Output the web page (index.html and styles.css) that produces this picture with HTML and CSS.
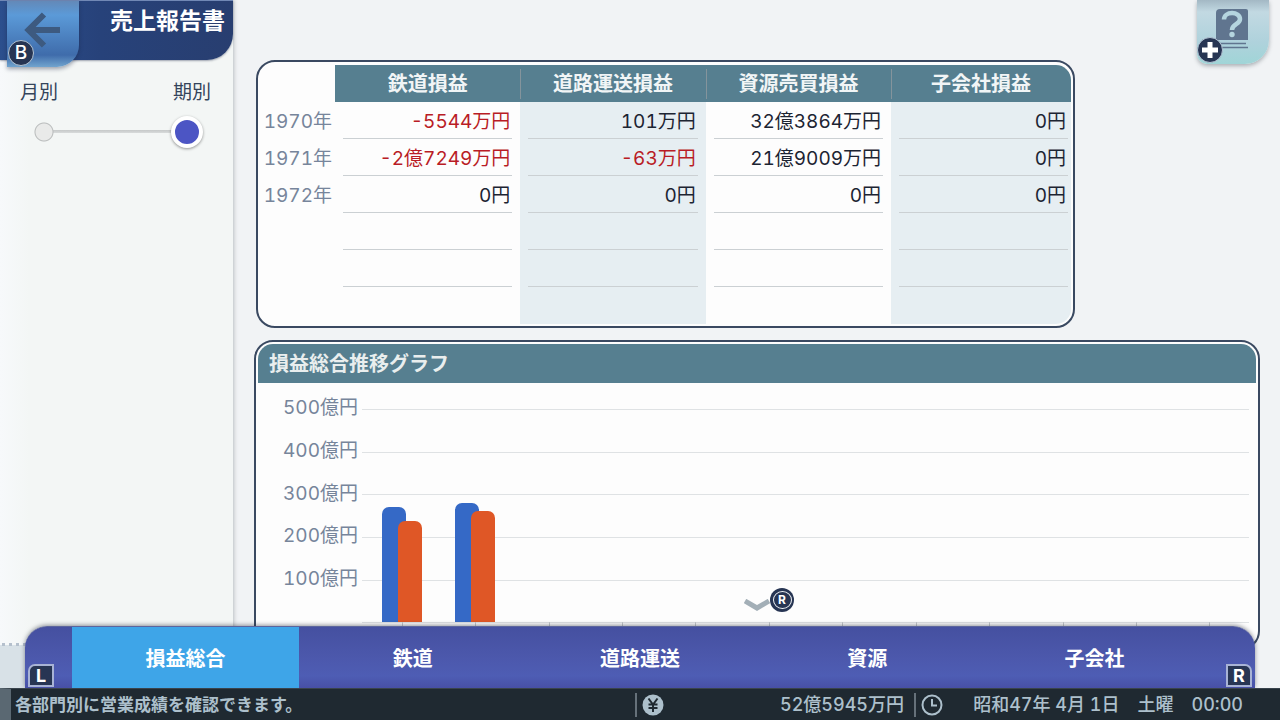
FILE: index.html
```html
<!DOCTYPE html>
<html lang="ja">
<head>
<meta charset="utf-8">
<meta name="viewport" content="width=device-width, initial-scale=1">
<title>売上報告書</title>
<link rel="stylesheet" href="styles.css">
</head>
<body>
<div class="screen">
  <aside class="sidebar">
    <header class="title-bar">
      <button class="back" type="button" aria-label="戻る">
        <svg class="back-arrow" viewBox="0 0 38 38" width="38" height="38" aria-hidden="true"><path d="M36 19H5M20 3.500L4.500 19 20 34.500" fill="none" stroke="#3d5a80" stroke-width="6"/></svg>
        <span class="pad-key key-b">B</span>
      </button>
      <h1 class="title">売上報告書</h1>
    </header>
    <div class="period">
      <div class="period-labels">
        <label for="period">月別</label>
        <label for="period">期別</label>
      </div>
      <input class="period-slider" id="period" type="range" min="0" max="1" step="1" value="1">
    </div>
    <div class="dotted-strip"></div>
  </aside>

  <main class="content">
    <section class="card table-card">
      <table class="ledger">
        <colgroup><col class="col-year"><col class="col-value"><col class="col-value"><col class="col-value"><col></colgroup>
        <thead>
          <tr><td class="corner"></td><th scope="col">鉄道損益</th><th scope="col">道路運送損益</th><th scope="col">資源売買損益</th><th scope="col">子会社損益</th></tr>
        </thead>
        <tbody>
          <tr><th scope="row">1970年</th><td class="loss">-5544万円</td><td>101万円</td><td>32億3864万円</td><td>0円</td></tr>
          <tr><th scope="row">1971年</th><td class="loss">-2億7249万円</td><td class="loss">-63万円</td><td>21億9009万円</td><td>0円</td></tr>
          <tr><th scope="row">1972年</th><td>0円</td><td>0円</td><td>0円</td><td>0円</td></tr>
          <tr><th></th><td></td><td></td><td></td><td></td></tr>
          <tr><th></th><td></td><td></td><td></td><td></td></tr>
          <tr><th></th><td></td><td></td><td></td><td></td></tr>
        </tbody>
      </table>
    </section>

    <section class="card chart-card">
      <h2 class="chart-title">損益総合推移グラフ</h2>
      <div class="chart">
        <div class="scale">
          <div class="step"><span>500億円</span><i></i></div>
          <div class="step"><span>400億円</span><i></i></div>
          <div class="step"><span>300億円</span><i></i></div>
          <div class="step"><span>200億円</span><i></i></div>
          <div class="step"><span>100億円</span><i></i></div>
          <div class="step"><span></span><i></i></div>
        </div>
        <div class="bars">
          <div class="group"><b class="bar blue" style="height:54%"></b><b class="bar orange" style="height:47.500%"></b></div>
          <div class="group"><b class="bar blue" style="height:56%"></b><b class="bar orange" style="height:52%"></b></div>
          <div class="group"></div><div class="group"></div><div class="group"></div><div class="group"></div>
          <div class="group"></div><div class="group"></div><div class="group"></div><div class="group"></div>
          <div class="group"></div><div class="group"></div>
        </div>
      </div>
    </section>
  </main>

  <button class="help" type="button" aria-label="ヘルプ">
    <svg viewBox="0 0 34 42" width="34" height="42" aria-hidden="true">
      <path d="M5 0h26q2 0 2 2v29H1V4q0-4 4-4z" fill="#60758f"/>
      <path d="M2 34.500h29M5 38.500h28" stroke="#60758f" stroke-width="1.500"/>
      <path d="M9 10.500C9 2 25 2 25 10c0 5.500-8 5-8 11" fill="none" stroke="#b5d5df" stroke-width="4.500"/>
      <circle cx="17" cy="25.500" r="2.700" fill="#b5d5df"/>
    </svg>
    <span class="pad-key key-plus"><svg viewBox="0 0 18 18" width="18" height="18" aria-hidden="true"><path d="M9 1v16M1 9h16" stroke="#fff" stroke-width="5" stroke-linejoin="round"/></svg></span>
  </button>

  <div class="scroll-hint" aria-hidden="true">
    <svg viewBox="0 0 26 12" width="26" height="12"><path d="M1 2l12 7 12-7" fill="none" stroke="#a3afb7" stroke-width="5"/></svg>
    <span class="stick"><span>R</span></span>
  </div>

  <nav class="tabs">
    <span class="shoulder left">L</span>
    <button class="tab active" type="button">損益総合</button>
    <button class="tab" type="button">鉄道</button>
    <button class="tab" type="button">道路運送</button>
    <button class="tab" type="button">資源</button>
    <button class="tab" type="button">子会社</button>
    <span class="shoulder right">R</span>
  </nav>
</div>

<footer class="status">
  <p class="message">各部門別に営業成績を確認できます。</p>
  <div class="money">
    <svg viewBox="0 0 22 22" width="22" height="22" aria-hidden="true"><circle cx="11" cy="11" r="10.500" fill="#adc0cc"/><path d="M6.500 4.500L11 10.500l4.500-6M11 10v8M6.500 10.500h9M6.500 14h9" fill="none" stroke="#1f2931" stroke-width="2"/></svg>
    <span>52億5945万円</span>
  </div>
  <div class="clock">
    <svg viewBox="0 0 22 22" width="22" height="22" aria-hidden="true"><circle cx="11" cy="11" r="9.500" fill="none" stroke="#adc0cc" stroke-width="2"/><path d="M11 5v6.500h5" fill="none" stroke="#adc0cc" stroke-width="2"/></svg>
    <span class="date">昭和47年 4月 1日</span>
    <span>土曜</span>
    <time>00:00</time>
  </div>
</footer>
</body>
</html>
```

FILE: styles.css
```css
* { box-sizing: border-box; }

body {
  margin: 0;
  height: 100vh;
  display: flex;
  flex-direction: column;
  overflow: hidden;
  background: #f1f3f5;
  color: #1c2432;
  font-family: Inter, "Noto Sans CJK JP", sans-serif;
  font-size: 20px;
  font-variant-numeric: tabular-nums;
  line-height: 28px;
}

button {
  border: 0;
  padding: 0;
  font: inherit;
  cursor: pointer;
}

.screen {
  position: relative;
  flex: 1;
  min-height: 0;
  display: grid;
  grid-template-columns: 233px 1fr;
  overflow: hidden;
}

/* Sidebar */
.sidebar {
  display: flex;
  flex-direction: column;
  background: linear-gradient(90deg, #f7f9fb, #f3f6f5 30px);
  box-shadow: 1px 0 4px rgba(60, 70, 80, .3);
}

.title-bar {
  display: flex;
  align-items: flex-start;
  justify-content: space-between;
  height: 60px;
  padding: 0 8px 0 7px;
  background: linear-gradient(90deg, #2c4f8d, #27427a 100px, #283e70);
  border-top: 1px solid #7188b5;
  border-bottom-right-radius: 26px;
  box-shadow: 0 1px 2px rgba(30, 40, 70, .4);
}

.title {
  margin: 0;
  padding-top: 4px;
  color: #fff;
  font-size: 23px;
  font-weight: 700;
  line-height: 32px;
}

.back {
  position: relative;
  width: 72px;
  height: 66px;
  background: linear-gradient(#6389b8, #5b9ad8 14px, #3f6cab 54px, #71a4ce);
  border-bottom-right-radius: 22px;
  box-shadow: 0 2px 4px rgba(20, 30, 60, .4);
}

.back-arrow {
  display: block;
  margin: -8px auto 0;
}

.pad-key {
  position: absolute;
  display: flex;
  align-items: center;
  justify-content: center;
  width: 26px;
  height: 26px;
  border: 1px solid #b5c5d5;
  border-radius: 50%;
  background: #273553;
  color: #fff;
  font-size: 19px;
  font-weight: 500;
}

.key-b { left: 1px; bottom: 1px; }
.key-plus { left: 0; bottom: 1px; }

.period { padding: 18px 20px; }

.period-labels {
  display: flex;
  justify-content: space-between;
  padding-right: 2px;
  color: #34445b;
  font-size: 19px;
  line-height: 30px;
}

.period-slider {
  display: block;
  appearance: none;
  width: calc(100% - 18px);
  height: 32px;
  margin: 8px;
  background:
    radial-gradient(circle at 16px 50%, #e9eae9 8px, #b8bbbb 9px, transparent 10px),
    linear-gradient(#c5c8c8, #d8dbdb) 16px 14px / calc(100% - 32px) 3px no-repeat;
}

.period-slider::-webkit-slider-thumb {
  appearance: none;
  width: 32px;
  height: 32px;
  border: 4px solid #fff;
  border-radius: 50%;
  background: #4c55c4;
  box-shadow: 0 1px 3px rgba(0, 0, 0, .4);
}

.dotted-strip {
  width: 60px;
  height: 46px;
  margin-top: auto;
  background:
    radial-gradient(circle, #b5c0cd 2px, transparent 2px) 0 0 / 7px 5px repeat-x,
    linear-gradient(transparent 3px, #d8e1e7 3px);
}

/* Cards */
.content { padding: 60px 20px 0 21px; }

.card {
  background: #fdfdfd;
  border: 2px solid #3a4961;
  border-radius: 19px;
  overflow: hidden;
}

.table-card {
  margin: 0 185px 0 2px;
  padding: 3px 2px 2px 0;
}

.ledger {
  width: 100%;
  table-layout: fixed;
  border-collapse: separate;
  border-spacing: 0;
  overflow: hidden;
  border-radius: 0 15px 15px 0;
}

.col-year { width: 77px; }
.col-value { width: 22.8%; }

.ledger td, .ledger th { height: 37px; padding: 0; }

.ledger thead th {
  background: linear-gradient(#84949c, #84949c) left center / 1px 30px no-repeat #567f90;
  color: #f1f5f6;
  font-weight: 700;
}

.ledger thead th:nth-child(2) { background: #567f90; }

.ledger tbody { font-size: 19px; }

.ledger tbody th {
  padding: 3px 3px 0 0;
  color: #77859b;
  font-weight: 400;
  text-align: right;
}

.ledger tbody td {
  padding: 3px 10px 0 0;
  text-align: right;
  background: linear-gradient(#cbd0d3, #cbd0d3) 8px 100% / calc(100% - 16px) 1px no-repeat;
}

.ledger tbody td:nth-child(odd) { background-color: #e6eef2; }

.ledger tbody td:last-child {
  padding-right: 5px;
  background-size: calc(100% - 11px) 1px;
}

.ledger tbody tr:last-child td { background-image: none; }
.ledger tbody .loss { color: #b91c25; }

.chart-card {
  margin-top: 12px;
  padding: 2px;
}

.chart-title {
  margin: 0;
  padding: 2px 11px 0;
  background: #567f90;
  border-radius: 15px 15px 0 0;
  color: #e9eeee;
  font-size: 20px;
  font-weight: 700;
  line-height: 37px;
}

.chart {
  display: grid;
  grid-template-columns: 105px 1fr;
  height: 263px;
  padding: 5px 7px 2px 0;
}

.scale {
  grid-area: 1 / 1 / 2 / 3;
  display: flex;
  flex-direction: column;
}

.step {
  flex: 1;
  display: grid;
  grid-template-columns: 100px 1fr;
  column-gap: 4px;
  align-items: center;
  color: #77859b;
  font-size: 19px;
  text-align: right;
}

.step span { padding-bottom: 2px; }
.step i { height: 1px; background: #dfe2e4; }

.bars {
  grid-area: 1 / 2;
  display: flex;
  margin: 21px 3px 22px 2px;
}

.group {
  position: relative;
  flex: 1;
  display: flex;
  align-items: flex-end;
  justify-content: center;
}

.group::after {
  content: "";
  position: absolute;
  top: 100%;
  left: 50%;
  width: 1px;
  height: 6px;
  background: #c5c9cc;
}

.bar { width: 24px; border-radius: 7px 7px 0 0; }
.blue { background: #3569c6; }
.orange { background: #df5726; margin-left: -8px; }

/* Controls over the page */
.help {
  position: absolute;
  top: 0;
  right: 11px;
  width: 72px;
  height: 64px;
  background: linear-gradient(#a3b8c4, #c2d9e2 12px, #afd2dc 42px, #a0d5d7);
  border-bottom-right-radius: 24px;
  border-bottom-left-radius: 10px;
  box-shadow: 0 2px 4px rgba(60, 70, 80, .4);
}

.help > svg { display: block; margin: -4px 0 0 18px; }
.key-plus svg { flex: none; }

.scroll-hint {
  position: absolute;
  left: 744px;
  bottom: 76px;
  display: flex;
  align-items: center;
}

.scroll-hint > svg { margin-top: 10px; }

.stick {
  display: grid;
  place-items: center;
  width: 24px;
  height: 24px;
  border-radius: 50%;
  background: #273553;
}

.stick span {
  display: grid;
  place-items: center;
  width: 19px;
  height: 18px;
  border: 1px solid #f2f5f8;
  border-radius: 50%;
  color: #fff;
  font-size: 12px;
  font-weight: 700;
  line-height: 12px;
}

.tabs {
  position: absolute;
  left: 25px;
  right: 25px;
  bottom: 0;
  display: flex;
  height: 62px;
  padding: 0 47px;
  overflow: hidden;
  border-top: 1px solid #5c659d;
  border-radius: 22px 22px 0 0;
  background: linear-gradient(#4550a0, #4c58ac 50%, #4e5db4 80%, #4850a6);
  box-shadow: 0 -1px 4px rgba(40, 45, 60, .5);
}

.tab {
  flex: 1;
  padding-top: 2px;
  background: transparent;
  color: #fff;
  font-weight: 700;
}

.tab.active { background: #3ea5e8; }

.shoulder {
  position: absolute;
  bottom: 1px;
  width: 26px;
  height: 23px;
  border: 2px solid #a8b3d5;
  background: #273553;
  color: #fff;
  font-size: 18px;
  font-weight: 700;
  line-height: 19px;
  text-align: center;
}

.shoulder.left { left: 3px; border-top-left-radius: 7px; }
.shoulder.right { right: 3px; border-top-right-radius: 7px; }

/* Status line */
.status {
  display: flex;
  align-items: center;
  height: 32px;
  border-left: 11px solid #5a6872;
  border-top: 1px solid #39434c;
  background: #1f2931;
  color: #adc0cc;
  font-size: 18px;
  font-weight: 500;
  line-height: 24px;
  white-space: nowrap;
}

.message {
  flex: 1;
  margin: 0;
  padding: 1px 0 0 4px;
  font-size: 17px;
  font-weight: 700;
}

.money, .clock {
  display: flex;
  align-items: center;
  height: 24px;
  padding-left: 5px;
  border-left: 2px solid #66717a;
}

.money { width: 279px; padding-right: 10px; justify-content: space-between; }
.clock { width: 366px; padding-right: 37px; gap: 18px; }
.clock .date { margin-left: auto; }
```
